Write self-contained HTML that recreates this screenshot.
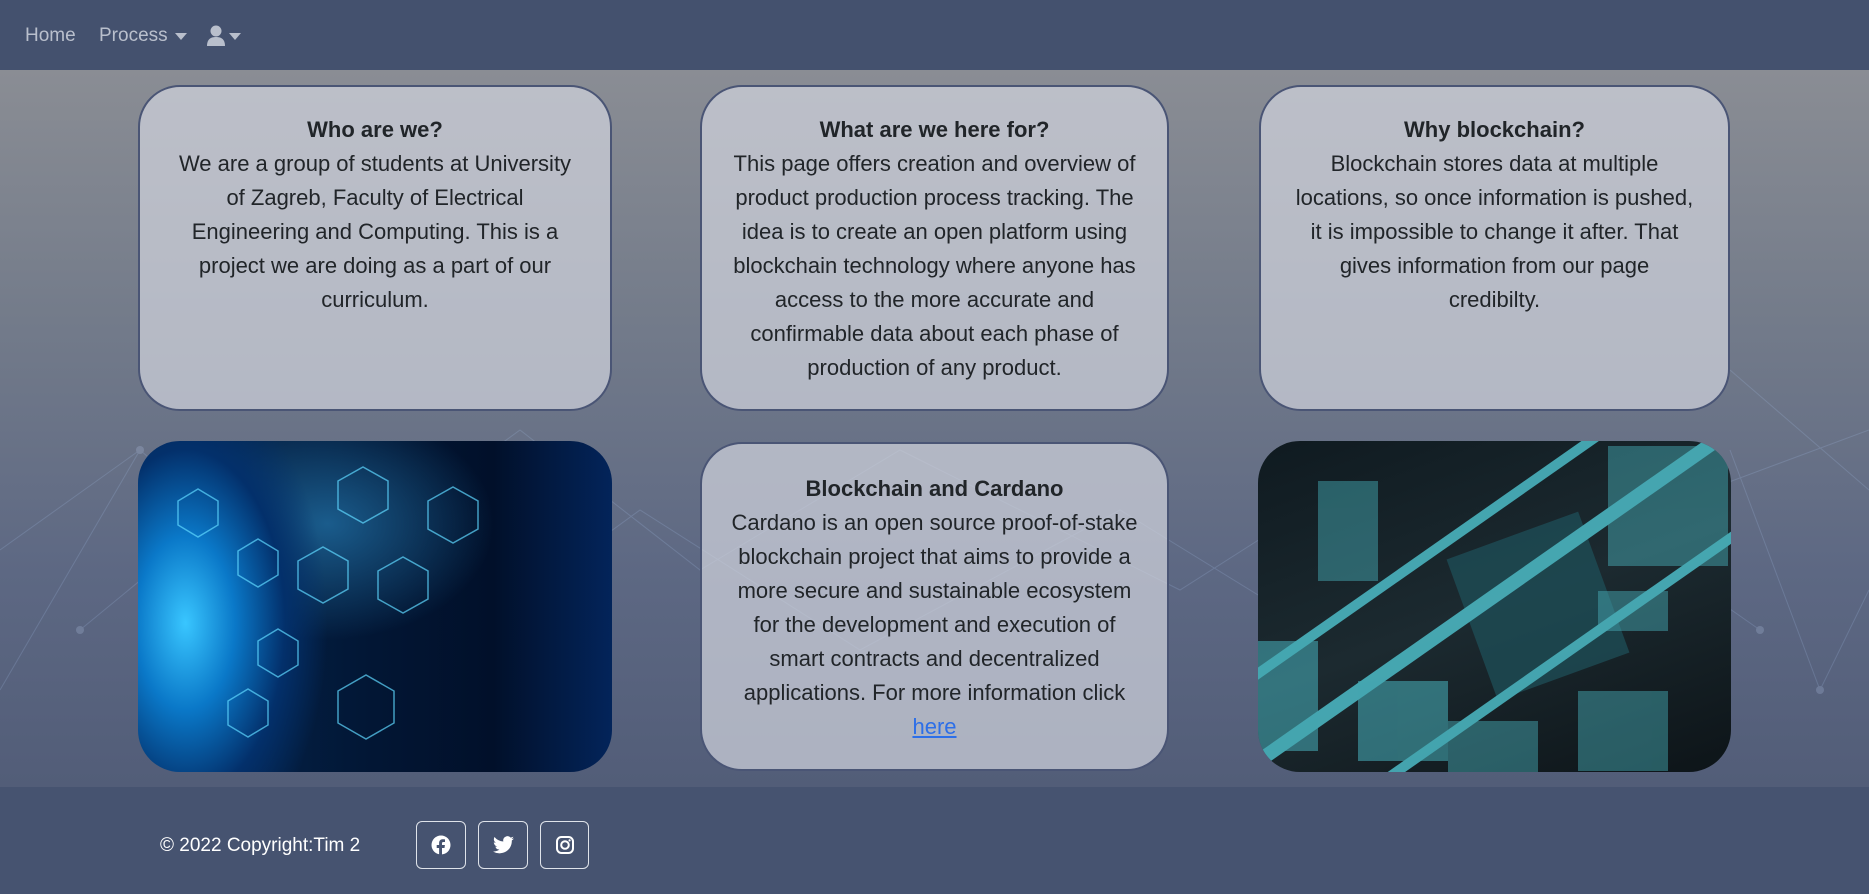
<!DOCTYPE html>
<html><head><meta charset="utf-8"><style>
*{box-sizing:border-box;margin:0;padding:0}
body{width:1869px;height:894px;overflow:hidden;font-family:"Liberation Sans",sans-serif;background:#465370;position:relative}
.nav{position:absolute;left:0;top:0;width:1869px;height:70px;background:#44516e}
.nav span{position:absolute;top:25px;font-size:19px;color:#b9bfcc}
.main{position:absolute;left:0;top:70px;width:1869px;height:717px;background:linear-gradient(180deg,#8a8d94 0%,#737b8a 35%,#5d6883 70%,#525d78 100%)}
.card{position:absolute;border:2px solid #4a5575;border-radius:42px;background:rgba(208,211,220,0.72);text-align:center;color:#212529;font-size:22px;line-height:34px;padding:26px 36px}
.card b{display:block;font-size:22px}
.img{position:absolute;border-radius:42px;overflow:hidden}
.foot{position:absolute;top:787px;left:0;width:1869px;height:107px;background:#465370}
.btn{position:absolute;top:821px;width:50px;height:48px;border:1px solid #dfe3ea;border-radius:6px;display:flex;align-items:center;justify-content:center}
</style></head><body>
<div class="nav">
<span style="left:25px">Home</span>
<span style="left:99px">Process</span>
<svg style="position:absolute;left:175px;top:33px" width="14" height="8"><path d="M0 0h12L6 7z" fill="#b9bfcc"/></svg>
<svg style="position:absolute;left:207px;top:25px" width="18" height="22"><circle cx="9" cy="6" r="5.5" fill="#b9bfcc"/><path d="M0 21c0-7 4-9 9-9s9 2 9 9z" fill="#b9bfcc"/></svg>
<svg style="position:absolute;left:229px;top:33px" width="14" height="8"><path d="M0 0h12L6 7z" fill="#b9bfcc"/></svg>
</div>
<div class="main">
<svg width="1869" height="717" style="position:absolute;left:0;top:0;opacity:.2">
<g stroke="#a8c4ee" stroke-width="1" fill="none">
<path d="M0 480L140 380L300 520L520 360L700 500L900 380L1180 520L1400 380L1600 460L1869 360"/>
<path d="M80 560L250 420L420 600L640 440L860 580L1120 440L1380 600L1560 420L1760 560"/>
<path d="M1730 300L1869 420M1730 380L1820 620L1869 520M0 620L140 380"/>
</g>
<g fill="#c8dcff"><circle cx="140" cy="380" r="4"/><circle cx="300" cy="520" r="4"/><circle cx="1600" cy="460" r="4"/><circle cx="1760" cy="560" r="4"/><circle cx="1820" cy="620" r="4"/><circle cx="80" cy="560" r="4"/></g>
</svg>
</div>
<div class="card" style="left:138px;top:85px;width:474px;height:326px"><b>Who are we?</b>We are a group of students at University of Zagreb, Faculty of Electrical Engineering and Computing. This is a project we are doing as a part of our curriculum.</div>
<div class="card" style="left:700px;top:85px;width:469px;height:326px;padding:26px 28px"><b>What are we here for?</b>This page offers creation and overview of product production process tracking. The idea is to create an open platform using blockchain technology where anyone has access to the more accurate and confirmable data about each phase of production of any product.</div>
<div class="card" style="left:1259px;top:85px;width:471px;height:326px;padding:26px 6px;white-space:nowrap"><b>Why blockchain?</b>Blockchain stores data at multiple<br>locations, so once information is pushed,<br>it is impossible to change it after. That<br>gives information from our page<br>credibilty.</div>
<div class="card" style="left:700px;top:442px;width:469px;height:329px;padding:28px 28px"><b>Blockchain and Cardano</b>Cardano is an open source proof-of-stake blockchain project that aims to provide a more secure and sustainable ecosystem for the development and execution of smart contracts and decentralized applications. For more information click <a style="color:#2d6fe8;text-decoration:underline">here</a></div>
<div class="img" style="left:138px;top:441px;width:474px;height:331px;background:radial-gradient(ellipse 30% 75% at 10% 55%,#39c6ff 0%,#0a78c8 35%,#03306b 70%,transparent 100%),radial-gradient(ellipse 50% 50% at 40% 25%,#1a5c8c 0%,transparent 70%),linear-gradient(90deg,#052a55 0%,#021634 50%,#01102a 75%,#03245a 100%)">
<svg width="474" height="331" style="position:absolute;left:0;top:0;opacity:.7"><g stroke="#5fd8ff" stroke-width="1.5" fill="none">
<path d="M40 60l20-12 20 12v24l-20 12-20-12z"/><path d="M100 110l20-12 20 12v24l-20 12-20-12z"/><path d="M200 40l25-14 25 14v28l-25 14-25-14z"/><path d="M290 60l25-14 25 14v28l-25 14-25-14z"/><path d="M160 120l25-14 25 14v28l-25 14-25-14z"/><path d="M240 130l25-14 25 14v28l-25 14-25-14z"/><path d="M200 250l28-16 28 16v32l-28 16-28-16z"/><path d="M120 200l20-12 20 12v24l-20 12-20-12z"/><path d="M90 260l20-12 20 12v24l-20 12-20-12z"/></g></svg></div>
<div class="img" style="left:1258px;top:441px;width:473px;height:331px;background:linear-gradient(160deg,#0f1a20,#1c2a30 50%,#0d1418)">
<svg width="473" height="331" style="position:absolute;left:0;top:0"><g fill="#54d0dc" opacity=".75">
<rect x="210" y="90" width="140" height="150" transform="rotate(-20 280 165)" fill="#1e4f58"/>
<g transform="rotate(-35 236 165)"><rect x="-40" y="80" width="560" height="10"/><rect x="-40" y="150" width="560" height="14"/><rect x="-40" y="240" width="560" height="10"/></g>
<rect x="0" y="200" width="60" height="110" opacity=".6"/><rect x="100" y="240" width="90" height="80" opacity=".6"/><rect x="340" y="150" width="70" height="40" opacity=".5"/><rect x="350" y="5" width="120" height="120" opacity=".5"/><rect x="60" y="40" width="60" height="100" opacity=".5"/><rect x="320" y="250" width="90" height="80" opacity=".5"/><rect x="190" y="280" width="90" height="51" opacity=".5"/></g></svg></div>
<div class="foot"></div>
<div style="position:absolute;left:160px;top:835px;font-size:19px;color:#fff">© 2022 Copyright:Tim 2</div>
<div class="btn" style="left:416px"><svg width="20" height="20" viewBox="0 0 20 20"><circle cx="10" cy="10" r="9.5" fill="#fff"/><path d="M11 20v-7h2.5l.4-3H11V8.3c0-.8.3-1.3 1.4-1.3H14V4.4c-.3 0-1.2-.1-2.2-.1-2.2 0-3.7 1.3-3.7 3.8V10H5.7v3h2.4v7z" fill="#465370"/></svg></div>
<div class="btn" style="left:478px"><svg width="21" height="18" viewBox="0 0 24 20"><path d="M24 2.4a10 10 0 01-2.8.8A5 5 0 0023.3.4a10 10 0 01-3.1 1.2A4.9 4.9 0 0011.8 6 14 14 0 011.7.9a4.9 4.9 0 001.5 6.6A4.9 4.9 0 01.9 6.9a4.9 4.9 0 004 4.8 5 5 0 01-2.2.1 4.9 4.9 0 004.6 3.4A9.9 9.9 0 010 17.3 14 14 0 007.5 19.5c9.1 0 14-7.5 14-14v-.6A10 10 0 0024 2.4z" fill="#fff"/></svg></div>
<div class="btn" style="left:540px;width:49px"><svg width="18" height="18" viewBox="0 0 18 18"><rect x="1" y="1" width="16" height="16" rx="4.5" fill="none" stroke="#fff" stroke-width="2"/><circle cx="9" cy="9" r="3.8" fill="none" stroke="#fff" stroke-width="2"/><circle cx="13.6" cy="4.4" r="1.1" fill="#fff"/></svg></div>
</body></html>
